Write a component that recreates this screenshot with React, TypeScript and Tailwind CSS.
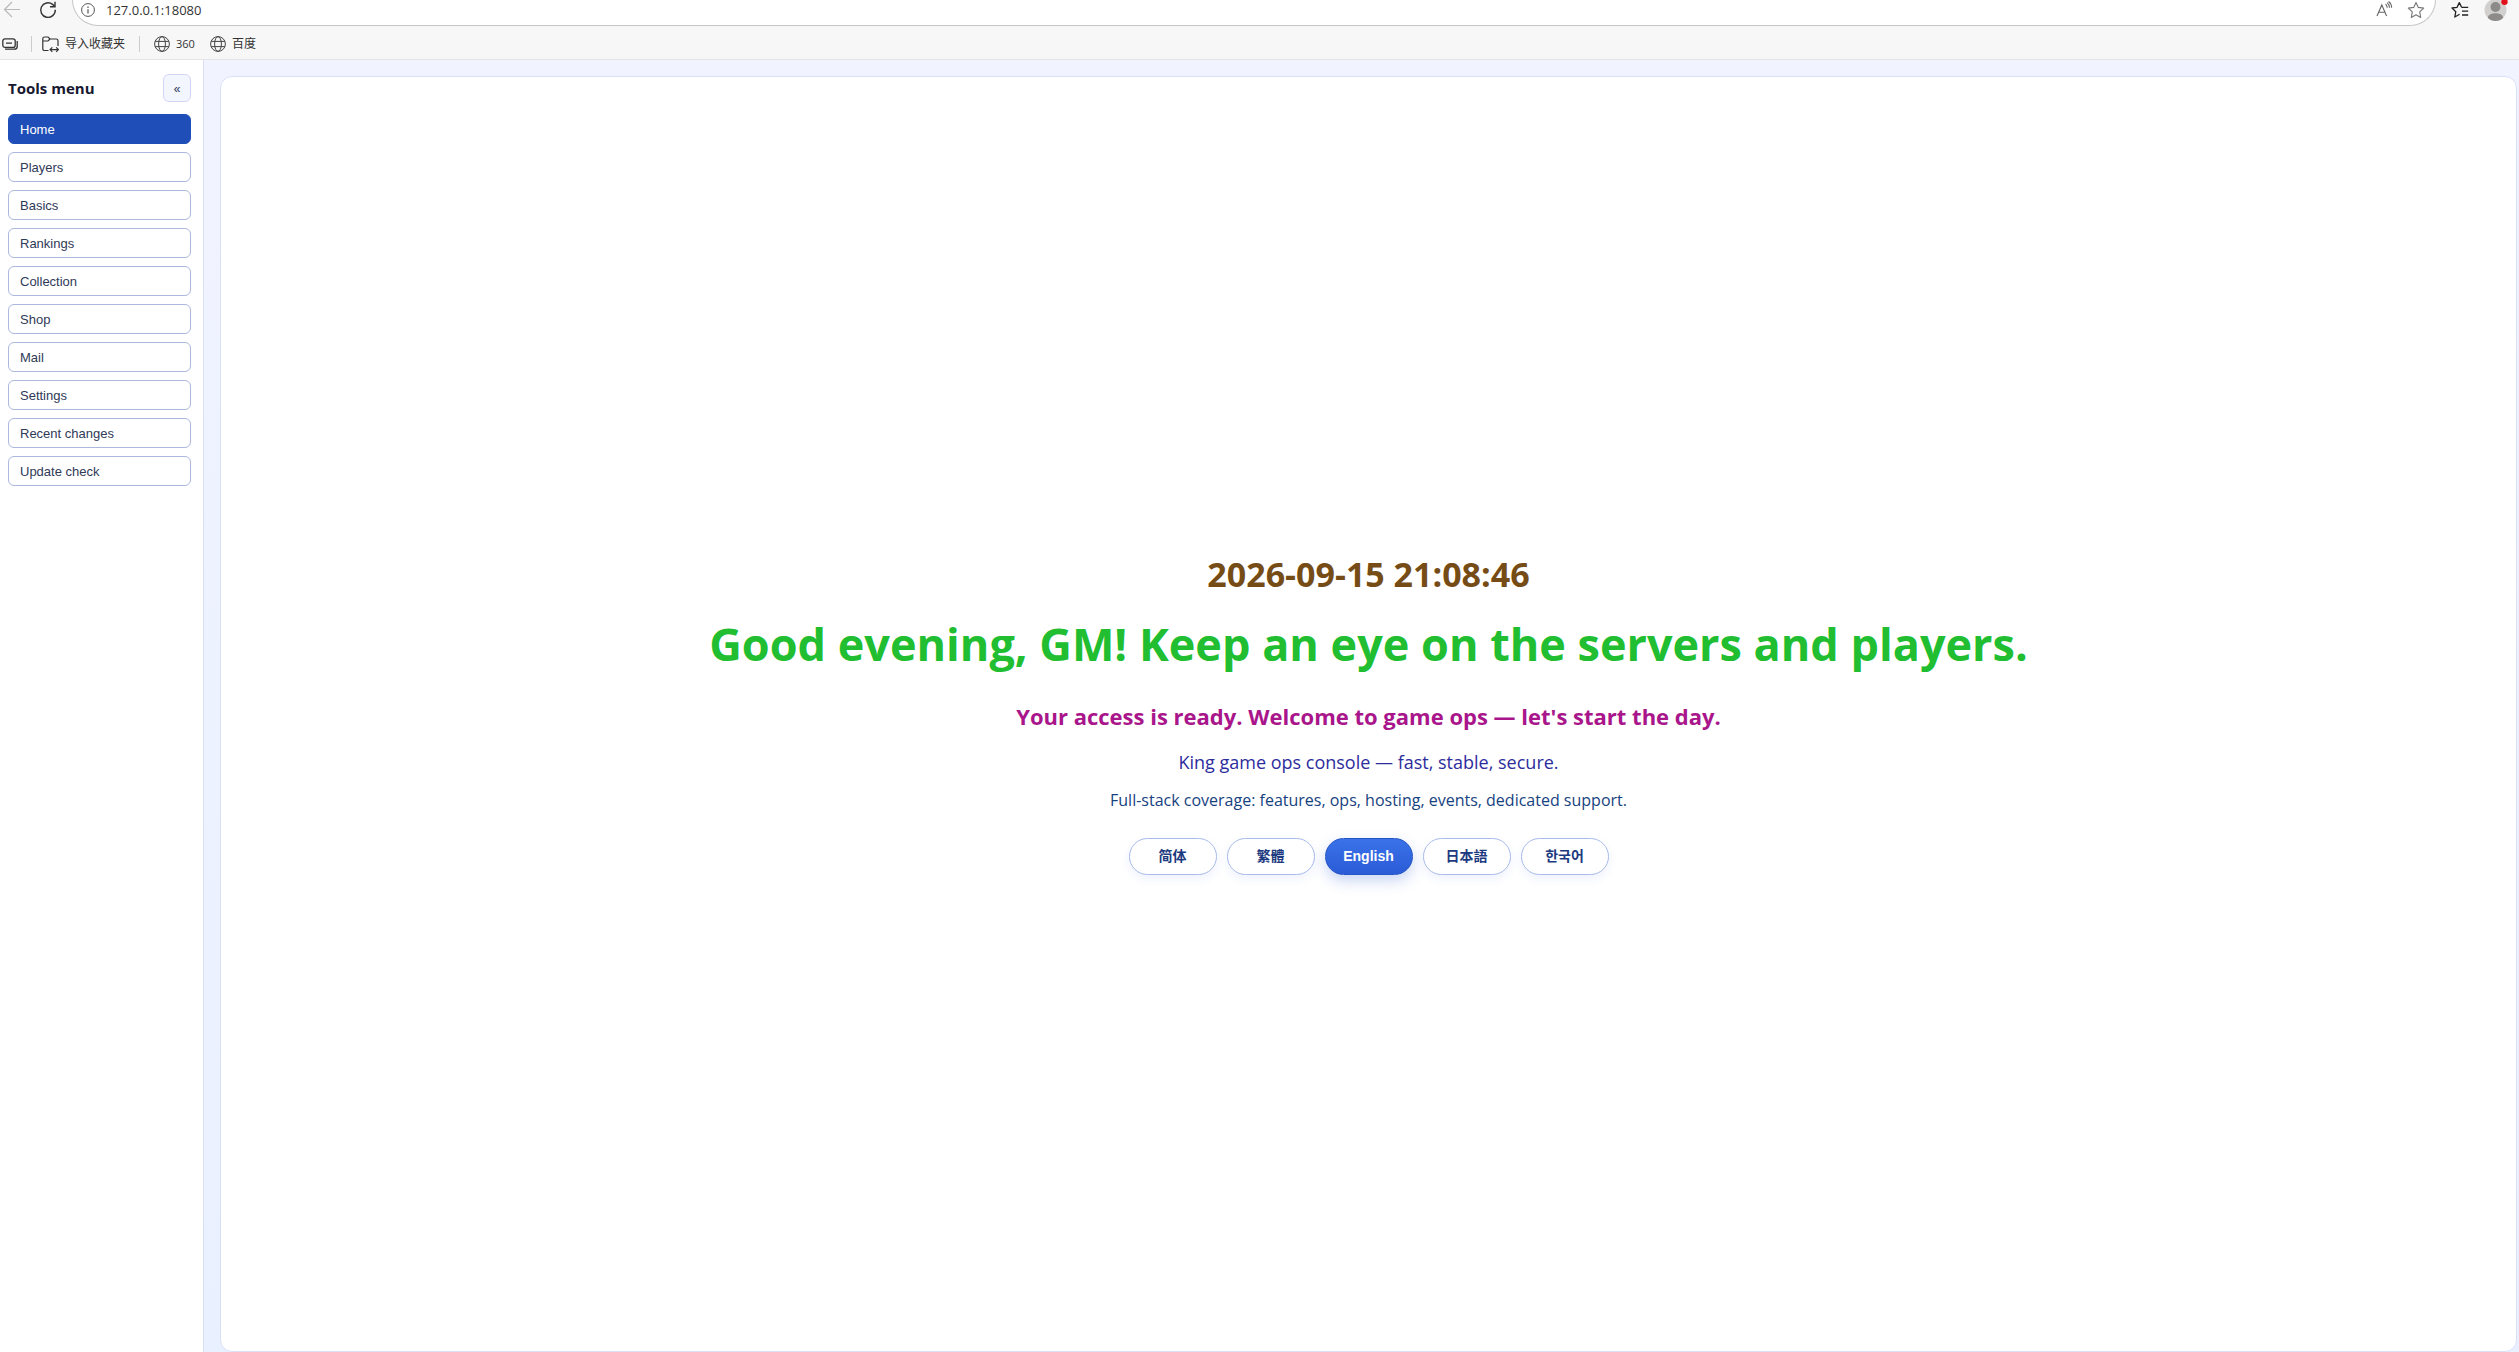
import { useState } from "react";

const menuItems = [
  "Home",
  "Players",
  "Basics",
  "Rankings",
  "Collection",
  "Shop",
  "Mail",
  "Settings",
  "Recent changes",
  "Update check",
];

const languages = ["简体", "繁體", "English", "日本語", "한국어"];

const GlobeIcon = () => (
  <svg className="size-4" viewBox="0 0 16 16" fill="none" stroke="#444" aria-hidden="true">
    <circle cx="8" cy="8" r="7.4" />
    <ellipse cx="8" cy="8" rx="3.4" ry="7.4" />
    <path d="M1.2 5.4h13.6M1.2 10.6h13.6" />
  </svg>
);

const BrowserBar = () => (
  <header className="h-[60px] border-b border-[#e4e4e8] bg-[#f7f7f7] font-['Open_Sans','Noto_Sans_CJK_SC',sans-serif] text-[#333]">
    <div className="flex h-[26px] items-start">
      <button aria-label="Back" className="ml-[3px] mt-px">
        <svg className="size-[18px]" viewBox="0 0 18 18" fill="none" stroke="#b9b9b9" strokeWidth="1.2">
          <path d="M17 8.5H1.5M9 1 1.5 8.5 9 16" />
        </svg>
      </button>
      <button aria-label="Refresh" className="ml-[18px] mt-px">
        <svg className="size-[18px]" viewBox="0 0 18 18" fill="none" stroke="#333" strokeWidth="1.4">
          <path d="M16.3 8.8A7.3 7.3 0 1 1 13.6 3.4L15.8 5.4" />
          <path d="M16 .8V5.7H11" />
        </svg>
      </button>
      <div className="ml-[15px] flex h-[26px] flex-1 items-start rounded-b-full border border-t-0 border-[#c6c6c6] bg-white px-2">
        <svg className="mt-[3px] size-[14px]" viewBox="0 0 14 14" fill="none" stroke="#555" aria-hidden="true">
          <circle cx="7" cy="7" r="6.4" />
          <path d="M7 6.2v4.3M7 3.6v1.3" strokeWidth="1.2" />
        </svg>
        <span className="ml-[11px] flex-1 text-[13px] leading-5">127.0.0.1:18080</span>
        <button aria-label="Read aloud" className="mt-px">
          <svg className="size-[17px]" viewBox="0 0 17 17" fill="none" stroke="#666" strokeWidth="1.1">
            <path d="M1 15 5.8 4 10.6 15M2.8 11.2h6M9.5 3.2c1.2 1 1.7 2.2 1.7 3.6M11 1.6c1.7 1.3 2.5 3 2.5 5.2M12.6.5c2.1 1.6 3 3.8 3 6.3" />
          </svg>
        </button>
        <button aria-label="Add favorite" className="ml-[14px] mr-0.5 mt-px">
          <svg className="size-[18px]" viewBox="0 0 18 18" fill="none" stroke="#777" strokeWidth="1.1" strokeLinejoin="round">
            <path d="m9 1.4 2.3 5 5.4.7-4 3.8 1 5.5L9 13.7l-4.7 2.7 1-5.5-4-3.8 5.4-.7z" />
          </svg>
        </button>
      </div>
      <button aria-label="Favorites" className="ml-[15px] mt-px">
        <svg className="size-[18px]" viewBox="0 0 18 18" fill="none" stroke="#222" strokeWidth="1.3" strokeLinejoin="round">
          <path d="M10.6 6.3 8.3 1.6 6.1 6.3 1 7l3.8 3.7-1 5.3 4.8-2.7M10.6 6.3h6.6M11 10.2h6.2M11 14h6.2" />
        </svg>
      </button>
      <button aria-label="Profile" className="ml-[15px] mr-[11px]">
        <svg className="h-[22px] w-[24px]" viewBox="0 0 24 22">
          <circle cx="11.5" cy="10" r="11" fill="#d2d0ce" />
          <circle cx="11.5" cy="7" r="5" fill="#8d8b89" />
          <path d="M3.8 17.8Q4.5 13.2 11.5 13.2T19.2 17.8Q16 21 11.5 21T3.8 17.8Z" fill="#8d8b89" />
          <circle cx="20.5" cy="1.8" r="3.2" fill="#e3101c" />
        </svg>
      </button>
    </div>
    <nav className="flex h-9 items-center text-xs">
      <a href="#collections" aria-label="Collections" className="ml-0.5">
        <svg className="h-3 w-4" viewBox="0 0 16 12" fill="none" stroke="#333" strokeWidth="1.3">
          <rect x=".8" y=".8" width="12.4" height="8.6" rx="2.2" />
          <path d="M4 5.1h6M3 11.2h9.5q2.7 0 2.7-2.7V3" />
        </svg>
      </a>
      <span className="ml-[13px] h-4 w-px bg-[#ccc]" />
      <a href="#import" className="ml-[10px] flex items-center gap-[6px]">
        <svg className="size-[17px]" viewBox="0 0 17 17" fill="none" stroke="#333" strokeWidth="1.2">
          <path d="M6.5 14.5H2.6Q.8 14.5.8 12.7V2.6Q.8 1 2.6 1H6l2 2h6.2Q16 3 16 4.8V10M1 5h5l2-2M8.3 13.6h8M10.3 11.4l-2.2 2.2 2.2 2.2M14.2 11.4l2.2 2.2-2.2 2.2" />
        </svg>
        导入收藏夹
      </a>
      <span className="ml-[14px] h-4 w-px bg-[#ccc]" />
      <a href="#360" className="ml-[14px] flex items-center gap-[6px] text-[11px]">
        <GlobeIcon />
        360
      </a>
      <a href="#baidu" className="ml-[15px] flex items-center gap-[6px]">
        <GlobeIcon />
        百度
      </a>
    </nav>
  </header>
);

const Sidebar = () => {
  const [active, setActive] = useState("Home");

  return (
    <aside className="w-[204px] shrink-0 border-r border-[#dce0f5] bg-white pl-2 pr-3 pt-[14px]">
      <div className="mb-3 flex items-center justify-between">
        <h2 className="text-[15px] font-bold text-[#16182f]">Tools menu</h2>
        <button
          aria-label="Collapse menu"
          className="size-7 rounded-md border border-[#d3d3f6] bg-[#f3f5ff] pt-0.5 font-['Liberation_Sans',sans-serif] text-xs text-[#2c3658]"
        >
          «
        </button>
      </div>
      <nav className="flex flex-col gap-2">
        {menuItems.map((item) => (
          <button
            key={item}
            onClick={() => setActive(item)}
            className={
              "h-[30px] rounded-md border px-[11px] pt-0.5 text-left font-['Liberation_Sans',sans-serif] text-[13px] " +
              (item === active
                ? "border-[#1f4eb8] bg-[#1f4eb8] text-white"
                : "border-[#acb8dd] bg-white text-[#2f3a57]")
            }
          >
            {item}
          </button>
        ))}
      </nav>
    </aside>
  );
};

const Welcome = () => {
  const [language, setLanguage] = useState("English");

  return (
    <section className="flex flex-1 flex-col items-center justify-center rounded-xl border border-[#d9e0fa] bg-white pb-0.5 text-center">
      <p className="text-[34px] leading-[44px] font-bold text-[#764c16]">2026-09-15 21:08:46</p>
      <h1 className="mt-4 text-[45px] leading-[64px] font-bold text-[#20be30]">
        Good evening, GM! Keep an eye on the servers and players.
      </h1>
      <p className="mt-6 text-[22px] leading-8 font-bold text-[#a9158a]">
        Your access is ready. Welcome to game ops — let's start the day.
      </p>
      <p className="mt-4 text-lg text-[#2d2d9c]">King game ops console — fast, stable, secure.</p>
      <p className="mt-3 text-base text-[#174280]">
        Full-stack coverage: features, ops, hosting, events, dedicated support.
      </p>
      <div className="mt-[26px] flex gap-[10px]">
        {languages.map((name) => (
          <button
            key={name}
            onClick={() => setLanguage(name)}
            className={
              "h-[37px] w-[88px] rounded-full border font-['Liberation_Sans','Noto_Sans_CJK_SC','Noto_Sans_CJK_KR',sans-serif] text-sm font-bold " +
              (name === language
                ? "border-[#2456c4] bg-linear-to-b from-[#3a72e8] to-[#2b5bd7] text-white shadow-[0_6px_14px_rgba(43,91,215,0.25)]"
                : "border-[#a9bbea] bg-white text-[#1d3a80] shadow-[0_4px_10px_rgba(43,91,215,0.08)]")
            }
          >
            {name}
          </button>
        ))}
      </div>
    </section>
  );
};

const App = () => {
  return (
    <div className="flex min-h-screen flex-col font-['Open_Sans','Noto_Sans_CJK_SC',sans-serif]">
      <BrowserBar />
      <div className="flex flex-1 bg-linear-to-b from-[#f1f4ff] to-[#e9f0ff]">
        <Sidebar />
        <main className="flex flex-1 pl-4 pr-[2px] pt-4">
          <Welcome />
        </main>
      </div>
    </div>
  );
};

export default App;
